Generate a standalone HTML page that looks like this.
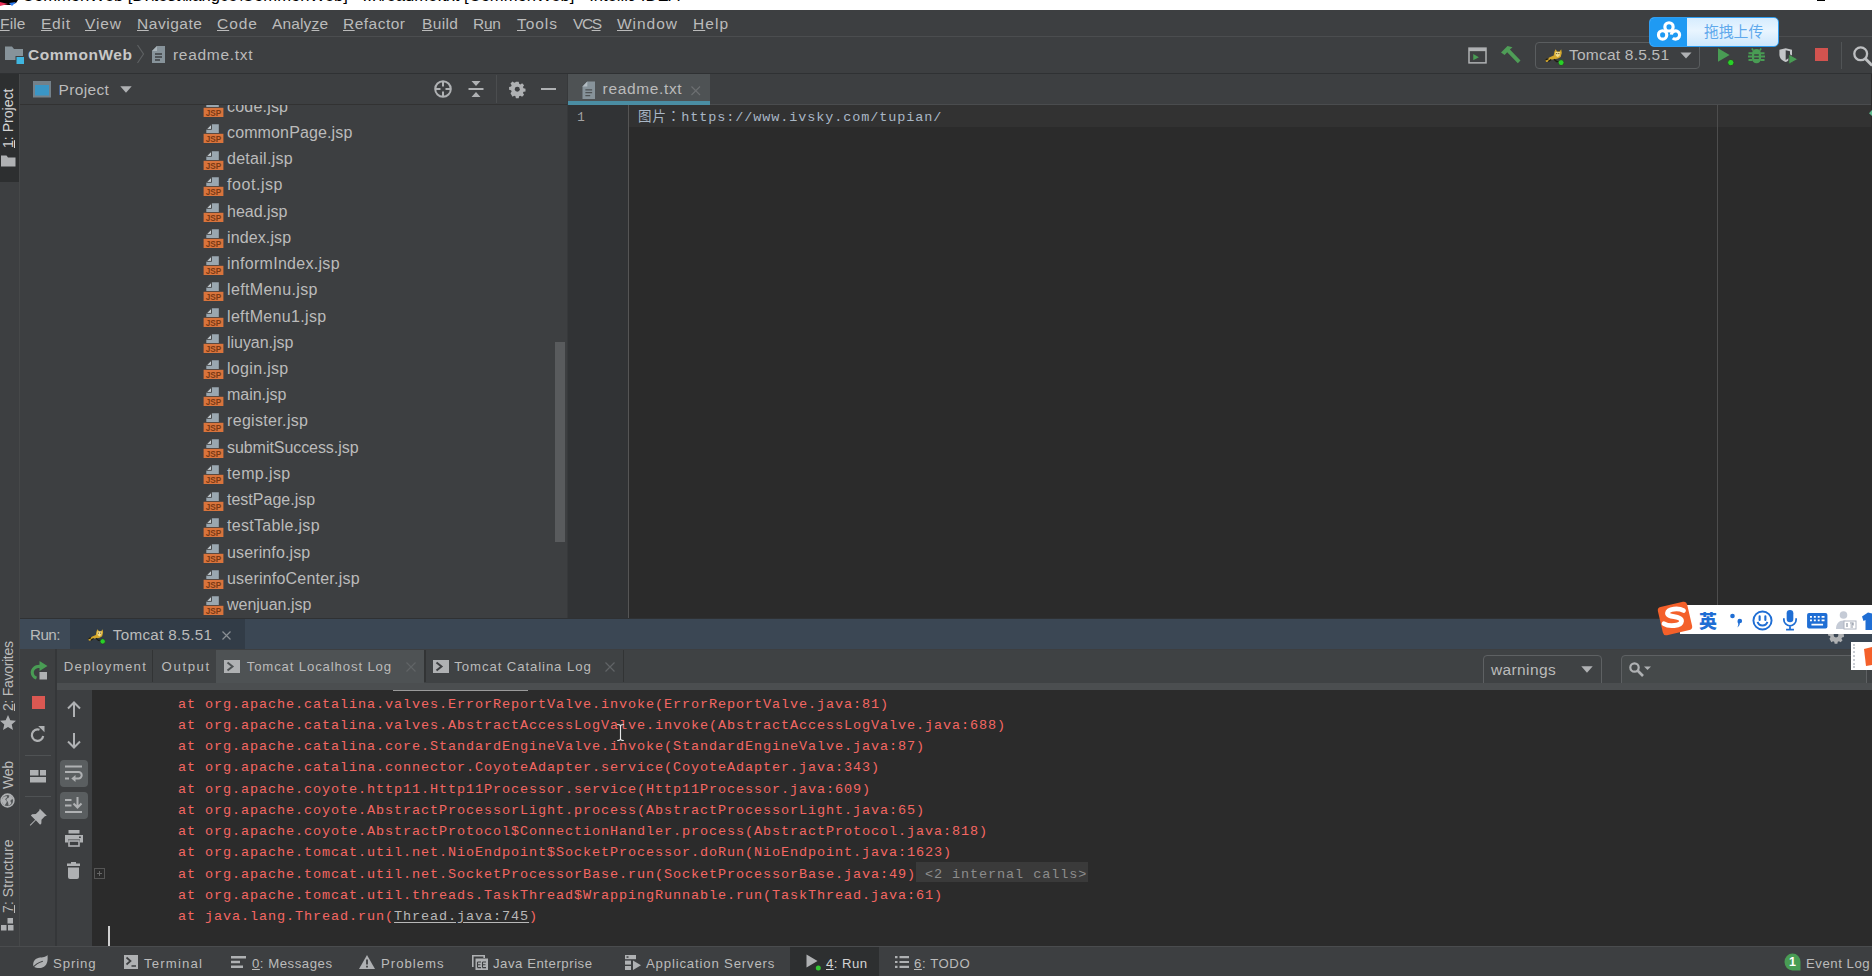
<!DOCTYPE html>
<html lang="en">
<head>
<meta charset="utf-8">
<title>CommonWeb - IntelliJ IDEA</title>
<style>
*{box-sizing:border-box;margin:0;padding:0}
html,body{width:1872px;height:976px;overflow:hidden;background:#3d3f41}
body{position:relative;font-family:"Liberation Sans","Noto Sans CJK SC",sans-serif;color:#bbbbbb;font-size:16px}
.a{position:absolute}
.t{position:absolute;white-space:nowrap;line-height:20px;height:20px;font-size:15.5px}
svg{position:absolute;overflow:visible}
u{text-decoration:underline;text-underline-offset:1px;text-decoration-thickness:1.3px}
#title{left:0;top:0;width:1872px;height:10px;background:#ffffff;overflow:hidden}
#title .t{color:#000;font-size:16.6px;top:-13.6px;left:22px}
#menu{left:0;top:10px;width:1872px;height:27px;background:#3d3f41;border-bottom:1px solid #4b4d4f}
#menu .t{top:3.5px;font-size:15.5px;color:#bbbbbb}
#nav{left:0;top:37px;width:1872px;height:36px;background:#3d3f41}
#navline{left:0;top:73px;width:1872px;height:1px;background:#2f3133;z-index:5}
#nav .t{top:7.7px;font-size:15.5px}
#lstripe{left:0;top:73px;width:20px;height:873px;background:#3d3f41;border-right:1px solid #464849}
.vt{position:absolute;white-space:nowrap;transform-origin:0 0;transform:rotate(-90deg);font-size:14.1px;line-height:18px;height:18px;color:#bbbbbb}
#proj{left:20px;top:73px;width:547px;height:545px;background:#3d3f41}
#projhead{left:0;top:0;width:547px;height:32px;border-bottom:1px solid #323232}
#tree{left:0;top:32px;width:547px;height:513px;overflow:hidden}
.row{position:absolute;left:183px;height:26px;width:300px}
.row span{position:absolute;left:24px;top:0;font-size:16px;line-height:20px;color:#bbbbbb;white-space:nowrap}
#split{left:567px;top:73px;width:1px;height:545px;background:#37393b}
#ed{left:568px;top:73px;width:1304px;height:545px;background:#2b2b2b;overflow:hidden}
#edtabs{left:0;top:0;width:1303px;height:32px;background:#3d3f41;border-bottom:1px solid #4a4c4e}
.mono{font-family:"Liberation Mono","Noto Sans CJK SC",monospace}
#run{left:20px;top:618px;width:1852px;height:328px;background:#3d3f41;border-top:1px solid #2f3133}
#runhead{left:0;top:0;width:1852px;height:30px;background:#3b4754}
#con{left:72px;top:71px;width:1780px;height:256px;background:#2b2b2b;overflow:hidden}
.cl{position:absolute;left:86px;font-size:13.5px;letter-spacing:.9px;line-height:20px;height:20px;color:#f46763;white-space:pre}
.lt{position:absolute;white-space:nowrap;font-size:13.2px;line-height:20px;height:20px;top:6px;color:#bbbbbb}
#bot{left:0;top:946px;width:1872px;height:30px;background:#3d3f41;border-top:1px solid #4a4c4e}
#bot .t{top:7.1px;font-size:13.2px}
</style>
</head>
<body>
<!-- TITLE -->
<div id="title" class="a"><div class="t">CommonWeb [D:\test\liangce\CommonWeb] - ...\readme.txt [CommonWeb] - IntelliJ IDEA</div>
<svg style="left:0;top:0" width="20" height="10" viewBox="0 0 20 10"><path d="M0 0h18l-2 3-6 2-10 0z" fill="#000"/><path d="M0 2l8 2-8 2z" fill="#e8325a"/><path d="M9 3l7-1-4 4z" fill="#2a7af0"/></svg>
<div class="a" style="left:1817px;top:0;width:8px;height:1px;background:#000"></div>
</div>
<!-- MENU -->
<div id="menu" class="a">
<div class="t" style="left:0px;letter-spacing:0.17px"><u>F</u>ile</div>
<div class="t" style="left:41px;letter-spacing:0.76px"><u>E</u>dit</div>
<div class="t" style="left:85px;letter-spacing:0.89px"><u>V</u>iew</div>
<div class="t" style="left:137px;letter-spacing:0.54px"><u>N</u>avigate</div>
<div class="t" style="left:217px;letter-spacing:0.97px"><u>C</u>ode</div>
<div class="t" style="left:272px;letter-spacing:0.14px">Analy<u>z</u>e</div>
<div class="t" style="left:343px;letter-spacing:0.49px"><u>R</u>efactor</div>
<div class="t" style="left:422px;letter-spacing:0.38px"><u>B</u>uild</div>
<div class="t" style="left:473px;letter-spacing:-0.23px">R<u>u</u>n</div>
<div class="t" style="left:517px;letter-spacing:0.95px"><u>T</u>ools</div>
<div class="t" style="left:573px;letter-spacing:-1.45px">VC<u>S</u></div>
<div class="t" style="left:617px;letter-spacing:0.97px"><u>W</u>indow</div>
<div class="t" style="left:693px;letter-spacing:1.04px"><u>H</u>elp</div>
</div>
<!-- NAV -->
<div id="nav" class="a">
<svg style="left:4px;top:8px" width="21" height="20" viewBox="0 0 21 20"><path d="M1 1.5h7l2 2.5h9v11H1z" fill="#87939a"/><rect x="12" y="11.5" width="8.5" height="8" fill="#40b6e0" stroke="#3d3f41" stroke-width="1"/></svg>
<div class="t" style="left:28px;font-weight:bold;color:#c8c8c8;letter-spacing:0.55px">CommonWeb</div>
<svg style="left:136px;top:7px" width="10" height="20" viewBox="0 0 10 20"><path d="M1.5 1l6 9-6 9" fill="none" stroke="#5d6062" stroke-width="1.2"/></svg>
<svg style="left:151px;top:8px" width="15" height="19" viewBox="0 0 15 19"><path d="M6 1h8v17H1V6z" fill="#87939a"/><path d="M1 6l5-5v5z" fill="#aab4ba"/><path d="M4 9h7M4 12h7M4 15h5" stroke="#3d3f41" stroke-width="1.3"/></svg>
<div class="t" style="left:173px;letter-spacing:0.70px">readme.txt</div>
<!-- toolbar right -->
<svg style="left:1468px;top:10px" width="19" height="17" viewBox="0 0 20 18"><rect x="1" y="1.2" width="18" height="15.6" fill="none" stroke="#afb1b3" stroke-width="1.6"/><rect x="1" y="1.2" width="18" height="3.2" fill="#afb1b3"/><path d="M5.5 7.5l6 3.3-6 3.3z" fill="#499c54"/></svg>
<svg style="left:1500px;top:8px" width="21" height="19" viewBox="0 0 21 19"><path d="M1 7.5l6.5-6.5 5 1.2-2.6 2.3 10.6 11-2.7 2.7-10.6-11-2.6 2.9z" fill="#4f9d57"/></svg>
<div class="a" style="left:1535px;top:5px;width:165px;height:27px;border:1px solid #5a5d5f;border-radius:4px"></div>
<svg style="left:1544.5px;top:12px" width="20" height="17" viewBox="0 0 20 17"><path d="M.5 10.800l4.200-2.600 4-1.600.7-3.800L10.500.300l1.700 2.100h2.400L16.200.300l.6 3.700-1.100 4-2.700 1.600-3.600.6-3.900.5-2.800 2.100-1.700.2z" fill="#d4a72c"/><path d="M10.300 2.900h4.900l-.5 3.700-2 1.600-2-1.600z" fill="#f2dc8e"/><path d="M.5 10.800l3-1.200M3.200 12.600l3-2.200M9 10.300l2.600 2.300h2.600" fill="none" stroke="#1d1d12" stroke-width="1.300"/><path d="M11.300 4.600h.9M13.400 4.600h.9" stroke="#30260a" stroke-width="1"/><circle cx="16.100" cy="13.600" r="3" fill="#27d127" stroke="#33402f" stroke-width="1"/></svg>
<div class="t" style="left:1569px;top:8.4px;letter-spacing:0.22px">Tomcat 8.5.51</div>
<svg style="left:1680px;top:15px" width="12" height="7" viewBox="0 0 12 7"><path d="M.5 .5h11L6 6.5z" fill="#afb1b3"/></svg>
<svg style="left:1716px;top:9px" width="20" height="21" viewBox="0 0 20 21"><path d="M2 2.200l11.600 6.800L2 15.800z" fill="#499c54"/><circle cx="14.800" cy="16.600" r="3.200" fill="#27d127" stroke="#33402f" stroke-width="1"/></svg>
<svg style="left:1747.5px;top:11px" width="17" height="16" viewBox="0 0 17 16"><path d="M4 5.500a4.500 4.500 0 0 1 9 0v5.300a4.500 4.500 0 0 1-9 0z" fill="#499c54"/><path d="M5.300 2.500L3.800.500M11.700 2.500L13.200.500" stroke="#499c54" stroke-width="1.600"/><path d="M.5 5.200h4M12.500 5.200h4M0 8.600h4.500M12.500 8.600H17M.5 12h4M12.500 12h4" stroke="#499c54" stroke-width="2"/><path d="M6.200 6.900h4.600M6.200 10.300h4.600" stroke="#3d3f41" stroke-width="1.500"/></svg>
<svg style="left:1779px;top:11px" width="20" height="17" viewBox="0 0 20 17"><path d="M.4 1.800L6.700.300l6.300 1.500v4.700c0 3.800-2.600 6.100-6.300 7.600C3 12.600.4 10.300.4 6.500z" fill="#c4c6c8"/><path d="M6.700 2.300v9.800c2.400-1.200 4.300-2.900 4.300-5.600V3.300z" fill="#3d3f41"/><path d="M9.800 6.200l9 5-9 5z" fill="#499c54" stroke="#3d3f41" stroke-width=".9"/></svg>
<div class="a" style="left:1814.500px;top:11.300px;width:13px;height:12.700px;background:#d2534f"></div>
<div class="a" style="left:1841px;top:5px;width:1px;height:27px;background:#515456"></div>
<svg style="left:1851px;top:8px" width="22" height="22" viewBox="0 0 22 22"><circle cx="9.700" cy="8.800" r="6.400" fill="none" stroke="#bdbfc1" stroke-width="2.300"/><path d="M14.200 13.500l7 7" stroke="#bdbfc1" stroke-width="3"/></svg>
</div>
<!-- BAIDU WIDGET -->
<div class="a" style="left:1649px;top:17px;width:130px;height:30px;border-radius:5px;background:linear-gradient(180deg,#d6ecfe 0,#e9f5ff 45%,#cde7fc 100%);border:1px solid #2f9df0;overflow:hidden">
<div class="a" style="left:-1px;top:-1px;width:38px;height:30px;background:#1f9af3"></div>
<svg style="left:5.500px;top:1.800px" width="26" height="22.500" viewBox="0 0 22 19"><circle cx="11" cy="5.800" r="3.500" fill="none" stroke="#fff" stroke-width="2.700"/><circle cx="5.600" cy="12.600" r="3.500" fill="none" stroke="#fff" stroke-width="2.700"/><path d="M13 12.400a3.500 3.500 0 1 1 1.200 2.900" fill="none" stroke="#fff" stroke-width="2.700"/></svg>
<div class="t" style="left:54px;top:4px;font-size:14.800px;color:#5fa9ec;letter-spacing:0">拖拽上传</div>
</div>
<div id="navline" class="a"></div>
<!-- LEFT STRIPE -->
<div id="lstripe" class="a">
<div class="a" style="left:0;top:0;width:19px;height:109px;background:#2d2f30"></div>
<div class="vt" style="left:-.6px;top:74.8px;color:#d4d4d4;letter-spacing:-0.01px"><u>1</u>: Project</div>
<svg style="left:1px;top:82px" width="15" height="12" viewBox="0 0 15 12"><path d="M0 .5h5.500l1.500 2h7.500v9H0z" fill="#afb1b3"/></svg>
<div class="vt" style="left:-.6px;top:638px;letter-spacing:-0.33px"><u>2</u>: Favorites</div>
<svg style="left:0;top:642px" width="16" height="15" viewBox="0 0 16 15"><path d="M8 0l2.300 5.200 5.700.500-4.300 3.800 1.300 5.500L8 12.100 3 15l1.300-5.500L0 5.700l5.700-.5z" fill="#afb1b3"/></svg>
<div class="vt" style="left:-.6px;top:716px;letter-spacing:-0.37px">Web</div>
<svg style="left:0;top:720px" width="15" height="15" viewBox="0 0 15 15"><circle cx="7.500" cy="7.500" r="6.400" fill="#55585a" stroke="#afb1b3" stroke-width="1.600"/><path d="M3 4.500c1.200-1.200 2.800-1.600 4-1.200.3 1-.2 1.800-1.200 2.200-.8.400-.6 1.400.2 1.800.9.400 1 1.600.4 2.400-.6.800-1 1.800-1.600 2.600C3 11.500 1.800 9.500 1.800 7.500c0-1.100.4-2.200 1.200-3z" fill="#afb1b3"/><path d="M9.500 2c1.800.6 3.200 2.200 3.600 4-.8.600-1.800.400-2.400 1.200-.6.800.2 2 .8 2.800-.6 1.200-1.600 2.200-2.800 2.800-.4-1.200-.2-2.600-.8-3.800-.5-1-1.700-1.600-1.400-2.800.3-1 1.700-1 2.300-1.800.5-.7.400-1.600.7-2.400z" fill="#afb1b3"/></svg>
<div class="vt" style="left:-.6px;top:840px;letter-spacing:0.06px"><u>7</u>: Structure</div>
<svg style="left:1px;top:845px" width="13" height="13" viewBox="0 0 13 13"><rect x="6.500" y="0" width="5.500" height="5.500" fill="#afb1b3"/><rect x="0" y="7" width="5.500" height="5.500" fill="#afb1b3"/><rect x="7" y="7" width="5.500" height="5.500" fill="#afb1b3"/></svg>
</div>
<!-- PROJECT -->
<div id="proj" class="a">
<div id="projhead" class="a">
<svg style="left:13px;top:8px" width="18" height="17" viewBox="0 0 18 17"><rect x="0" y="0" width="18" height="16.500" fill="#74818a"/><rect x="2" y="4" width="14" height="10.500" fill="#3a96c6"/></svg>
<div class="t" style="left:38.5px;top:6.6px;letter-spacing:0.34px">Project</div>
<svg style="left:100px;top:13px" width="12" height="7" viewBox="0 0 12 7"><path d="M.3 .3h11.400L6 6.800z" fill="#afb1b3"/></svg>
<svg style="left:413px;top:6px" width="20" height="20" viewBox="0 0 20 20"><circle cx="10" cy="10" r="7.800" fill="none" stroke="#afb1b3" stroke-width="2"/><path d="M10 2v5.500M10 12.500V18M2 10h5.500M12.500 10H18" stroke="#afb1b3" stroke-width="2"/></svg>
<svg style="left:448px;top:7px" width="16" height="18" viewBox="0 0 16 18"><path d="M.5 9h15" stroke="#afb1b3" stroke-width="2"/><path d="M3.500 1h9L8 6zM3.500 17h9L8 12z" fill="#afb1b3"/></svg>
<div class="a" style="left:476px;top:2px;width:1px;height:28px;background:#4b4d4f"></div>
<svg style="left:488.700px;top:7.700px" width="16.600" height="16.600" viewBox="0 0 18 18"><path d="M7.300 0h3.400l.5 2.400 1.500.7 2.100-1.400 2.400 2.400-1.400 2.100.7 1.500 2.400.5v3.400l-2.400.5-.7 1.500 1.400 2.100-2.400 2.400-2.100-1.400-1.500.7-.5 2.400H7.300l-.5-2.400-1.500-.7-2.100 1.400L.8 13.700l1.400-2.100-.7-1.500L-.9 9.600V6.200l2.400-.5.700-1.500L.8 2.100 3.200-.300l2.100 1.400 1.500-.7z" transform="translate(.9,.9) scale(.9)" fill="#afb1b3"/><circle cx="9" cy="9" r="2.700" fill="#3d3f41"/></svg>
<div class="a" style="left:521px;top:15px;width:15px;height:2px;background:#afb1b3"></div>
</div>
<div id="tree" class="a">
<div class="row" style="top:0"><svg style="left:0;top:-7.8px" width="21" height="21" viewBox="0 0 21 21"><path d="M8.500 1.200H15.800V10H3.300V6.400z" fill="#9aa7b0"/><path d="M3.300 6.400l5.200-5.200v5.200z" fill="#c3cbd0" stroke="#3d3f41" stroke-width=".9"/><rect x=".6" y="10.800" width="19.800" height="9.200" fill="#d9743c"/><text x="10.500" y="18.600" font-family="Liberation Sans,sans-serif" font-size="8.800" font-weight="bold" fill="#7a3a14" text-anchor="middle" textLength="15.500" lengthAdjust="spacingAndGlyphs">JSP</text></svg><span style="top:-8.2px;letter-spacing:0.20px">code.jsp</span></div>
<div class="row" style="top:0"><svg style="left:0;top:18.4px" width="21" height="21" viewBox="0 0 21 21"><path d="M8.500 1.200H15.800V10H3.300V6.400z" fill="#9aa7b0"/><path d="M3.300 6.400l5.200-5.200v5.200z" fill="#c3cbd0" stroke="#3d3f41" stroke-width=".9"/><rect x=".6" y="10.800" width="19.800" height="9.200" fill="#d9743c"/><text x="10.500" y="18.600" font-family="Liberation Sans,sans-serif" font-size="8.800" font-weight="bold" fill="#7a3a14" text-anchor="middle" textLength="15.500" lengthAdjust="spacingAndGlyphs">JSP</text></svg><span style="top:17.8px;letter-spacing:0.13px">commonPage.jsp</span></div>
<div class="row" style="top:0"><svg style="left:0;top:44.6px" width="21" height="21" viewBox="0 0 21 21"><path d="M8.500 1.200H15.800V10H3.300V6.400z" fill="#9aa7b0"/><path d="M3.300 6.400l5.200-5.200v5.200z" fill="#c3cbd0" stroke="#3d3f41" stroke-width=".9"/><rect x=".6" y="10.800" width="19.800" height="9.200" fill="#d9743c"/><text x="10.500" y="18.600" font-family="Liberation Sans,sans-serif" font-size="8.800" font-weight="bold" fill="#7a3a14" text-anchor="middle" textLength="15.500" lengthAdjust="spacingAndGlyphs">JSP</text></svg><span style="top:43.8px;letter-spacing:0.28px">detail.jsp</span></div>
<div class="row" style="top:0"><svg style="left:0;top:70.9px" width="21" height="21" viewBox="0 0 21 21"><path d="M8.500 1.200H15.800V10H3.300V6.400z" fill="#9aa7b0"/><path d="M3.300 6.400l5.200-5.200v5.200z" fill="#c3cbd0" stroke="#3d3f41" stroke-width=".9"/><rect x=".6" y="10.800" width="19.800" height="9.200" fill="#d9743c"/><text x="10.500" y="18.600" font-family="Liberation Sans,sans-serif" font-size="8.800" font-weight="bold" fill="#7a3a14" text-anchor="middle" textLength="15.500" lengthAdjust="spacingAndGlyphs">JSP</text></svg><span style="top:69.8px;letter-spacing:0.56px">foot.jsp</span></div>
<div class="row" style="top:0"><svg style="left:0;top:97.1px" width="21" height="21" viewBox="0 0 21 21"><path d="M8.500 1.200H15.800V10H3.300V6.400z" fill="#9aa7b0"/><path d="M3.300 6.400l5.200-5.200v5.200z" fill="#c3cbd0" stroke="#3d3f41" stroke-width=".9"/><rect x=".6" y="10.800" width="19.800" height="9.200" fill="#d9743c"/><text x="10.500" y="18.600" font-family="Liberation Sans,sans-serif" font-size="8.800" font-weight="bold" fill="#7a3a14" text-anchor="middle" textLength="15.500" lengthAdjust="spacingAndGlyphs">JSP</text></svg><span style="top:96.8px;letter-spacing:-0.01px">head.jsp</span></div>
<div class="row" style="top:0"><svg style="left:0;top:123.3px" width="21" height="21" viewBox="0 0 21 21"><path d="M8.500 1.200H15.800V10H3.300V6.400z" fill="#9aa7b0"/><path d="M3.300 6.400l5.200-5.200v5.200z" fill="#c3cbd0" stroke="#3d3f41" stroke-width=".9"/><rect x=".6" y="10.800" width="19.800" height="9.200" fill="#d9743c"/><text x="10.500" y="18.600" font-family="Liberation Sans,sans-serif" font-size="8.800" font-weight="bold" fill="#7a3a14" text-anchor="middle" textLength="15.500" lengthAdjust="spacingAndGlyphs">JSP</text></svg><span style="top:122.8px;letter-spacing:0.12px">index.jsp</span></div>
<div class="row" style="top:0"><svg style="left:0;top:149.5px" width="21" height="21" viewBox="0 0 21 21"><path d="M8.500 1.200H15.800V10H3.300V6.400z" fill="#9aa7b0"/><path d="M3.300 6.400l5.200-5.200v5.200z" fill="#c3cbd0" stroke="#3d3f41" stroke-width=".9"/><rect x=".6" y="10.800" width="19.800" height="9.200" fill="#d9743c"/><text x="10.500" y="18.600" font-family="Liberation Sans,sans-serif" font-size="8.800" font-weight="bold" fill="#7a3a14" text-anchor="middle" textLength="15.500" lengthAdjust="spacingAndGlyphs">JSP</text></svg><span style="top:148.8px;letter-spacing:0.29px">informIndex.jsp</span></div>
<div class="row" style="top:0"><svg style="left:0;top:175.7px" width="21" height="21" viewBox="0 0 21 21"><path d="M8.500 1.200H15.800V10H3.300V6.400z" fill="#9aa7b0"/><path d="M3.300 6.400l5.200-5.200v5.200z" fill="#c3cbd0" stroke="#3d3f41" stroke-width=".9"/><rect x=".6" y="10.800" width="19.800" height="9.200" fill="#d9743c"/><text x="10.500" y="18.600" font-family="Liberation Sans,sans-serif" font-size="8.800" font-weight="bold" fill="#7a3a14" text-anchor="middle" textLength="15.500" lengthAdjust="spacingAndGlyphs">JSP</text></svg><span style="top:174.8px;letter-spacing:0.38px">leftMenu.jsp</span></div>
<div class="row" style="top:0"><svg style="left:0;top:202.0px" width="21" height="21" viewBox="0 0 21 21"><path d="M8.500 1.200H15.800V10H3.300V6.400z" fill="#9aa7b0"/><path d="M3.300 6.400l5.200-5.200v5.200z" fill="#c3cbd0" stroke="#3d3f41" stroke-width=".9"/><rect x=".6" y="10.800" width="19.800" height="9.200" fill="#d9743c"/><text x="10.500" y="18.600" font-family="Liberation Sans,sans-serif" font-size="8.800" font-weight="bold" fill="#7a3a14" text-anchor="middle" textLength="15.500" lengthAdjust="spacingAndGlyphs">JSP</text></svg><span style="top:201.8px;letter-spacing:0.33px">leftMenu1.jsp</span></div>
<div class="row" style="top:0"><svg style="left:0;top:228.2px" width="21" height="21" viewBox="0 0 21 21"><path d="M8.500 1.200H15.800V10H3.300V6.400z" fill="#9aa7b0"/><path d="M3.300 6.400l5.200-5.200v5.200z" fill="#c3cbd0" stroke="#3d3f41" stroke-width=".9"/><rect x=".6" y="10.800" width="19.800" height="9.200" fill="#d9743c"/><text x="10.500" y="18.600" font-family="Liberation Sans,sans-serif" font-size="8.800" font-weight="bold" fill="#7a3a14" text-anchor="middle" textLength="15.500" lengthAdjust="spacingAndGlyphs">JSP</text></svg><span style="top:227.8px;letter-spacing:-0.04px">liuyan.jsp</span></div>
<div class="row" style="top:0"><svg style="left:0;top:254.4px" width="21" height="21" viewBox="0 0 21 21"><path d="M8.500 1.200H15.800V10H3.300V6.400z" fill="#9aa7b0"/><path d="M3.300 6.400l5.200-5.200v5.200z" fill="#c3cbd0" stroke="#3d3f41" stroke-width=".9"/><rect x=".6" y="10.800" width="19.800" height="9.200" fill="#d9743c"/><text x="10.500" y="18.600" font-family="Liberation Sans,sans-serif" font-size="8.800" font-weight="bold" fill="#7a3a14" text-anchor="middle" textLength="15.500" lengthAdjust="spacingAndGlyphs">JSP</text></svg><span style="top:253.8px;letter-spacing:0.32px">login.jsp</span></div>
<div class="row" style="top:0"><svg style="left:0;top:280.6px" width="21" height="21" viewBox="0 0 21 21"><path d="M8.500 1.200H15.800V10H3.300V6.400z" fill="#9aa7b0"/><path d="M3.300 6.400l5.200-5.200v5.200z" fill="#c3cbd0" stroke="#3d3f41" stroke-width=".9"/><rect x=".6" y="10.800" width="19.800" height="9.200" fill="#d9743c"/><text x="10.500" y="18.600" font-family="Liberation Sans,sans-serif" font-size="8.800" font-weight="bold" fill="#7a3a14" text-anchor="middle" textLength="15.500" lengthAdjust="spacingAndGlyphs">JSP</text></svg><span style="top:279.8px;letter-spacing:-0.04px">main.jsp</span></div>
<div class="row" style="top:0"><svg style="left:0;top:306.8px" width="21" height="21" viewBox="0 0 21 21"><path d="M8.500 1.200H15.800V10H3.300V6.400z" fill="#9aa7b0"/><path d="M3.300 6.400l5.200-5.200v5.200z" fill="#c3cbd0" stroke="#3d3f41" stroke-width=".9"/><rect x=".6" y="10.800" width="19.800" height="9.200" fill="#d9743c"/><text x="10.500" y="18.600" font-family="Liberation Sans,sans-serif" font-size="8.800" font-weight="bold" fill="#7a3a14" text-anchor="middle" textLength="15.500" lengthAdjust="spacingAndGlyphs">JSP</text></svg><span style="top:305.8px;letter-spacing:0.33px">register.jsp</span></div>
<div class="row" style="top:0"><svg style="left:0;top:333.1px" width="21" height="21" viewBox="0 0 21 21"><path d="M8.500 1.200H15.800V10H3.300V6.400z" fill="#9aa7b0"/><path d="M3.300 6.400l5.200-5.200v5.200z" fill="#c3cbd0" stroke="#3d3f41" stroke-width=".9"/><rect x=".6" y="10.800" width="19.800" height="9.200" fill="#d9743c"/><text x="10.500" y="18.600" font-family="Liberation Sans,sans-serif" font-size="8.800" font-weight="bold" fill="#7a3a14" text-anchor="middle" textLength="15.500" lengthAdjust="spacingAndGlyphs">JSP</text></svg><span style="top:332.8px;letter-spacing:-0.06px">submitSuccess.jsp</span></div>
<div class="row" style="top:0"><svg style="left:0;top:359.3px" width="21" height="21" viewBox="0 0 21 21"><path d="M8.500 1.200H15.800V10H3.300V6.400z" fill="#9aa7b0"/><path d="M3.300 6.400l5.200-5.200v5.200z" fill="#c3cbd0" stroke="#3d3f41" stroke-width=".9"/><rect x=".6" y="10.800" width="19.800" height="9.200" fill="#d9743c"/><text x="10.500" y="18.600" font-family="Liberation Sans,sans-serif" font-size="8.800" font-weight="bold" fill="#7a3a14" text-anchor="middle" textLength="15.500" lengthAdjust="spacingAndGlyphs">JSP</text></svg><span style="top:358.8px;letter-spacing:0.40px">temp.jsp</span></div>
<div class="row" style="top:0"><svg style="left:0;top:385.5px" width="21" height="21" viewBox="0 0 21 21"><path d="M8.500 1.200H15.800V10H3.300V6.400z" fill="#9aa7b0"/><path d="M3.300 6.400l5.200-5.200v5.200z" fill="#c3cbd0" stroke="#3d3f41" stroke-width=".9"/><rect x=".6" y="10.800" width="19.800" height="9.200" fill="#d9743c"/><text x="10.500" y="18.600" font-family="Liberation Sans,sans-serif" font-size="8.800" font-weight="bold" fill="#7a3a14" text-anchor="middle" textLength="15.500" lengthAdjust="spacingAndGlyphs">JSP</text></svg><span style="top:384.8px;letter-spacing:0.01px">testPage.jsp</span></div>
<div class="row" style="top:0"><svg style="left:0;top:411.7px" width="21" height="21" viewBox="0 0 21 21"><path d="M8.500 1.200H15.800V10H3.300V6.400z" fill="#9aa7b0"/><path d="M3.300 6.400l5.200-5.200v5.200z" fill="#c3cbd0" stroke="#3d3f41" stroke-width=".9"/><rect x=".6" y="10.800" width="19.800" height="9.200" fill="#d9743c"/><text x="10.500" y="18.600" font-family="Liberation Sans,sans-serif" font-size="8.800" font-weight="bold" fill="#7a3a14" text-anchor="middle" textLength="15.500" lengthAdjust="spacingAndGlyphs">JSP</text></svg><span style="top:410.8px;letter-spacing:0.30px">testTable.jsp</span></div>
<div class="row" style="top:0"><svg style="left:0;top:437.9px" width="21" height="21" viewBox="0 0 21 21"><path d="M8.500 1.200H15.800V10H3.300V6.400z" fill="#9aa7b0"/><path d="M3.300 6.400l5.200-5.200v5.200z" fill="#c3cbd0" stroke="#3d3f41" stroke-width=".9"/><rect x=".6" y="10.800" width="19.800" height="9.200" fill="#d9743c"/><text x="10.500" y="18.600" font-family="Liberation Sans,sans-serif" font-size="8.800" font-weight="bold" fill="#7a3a14" text-anchor="middle" textLength="15.500" lengthAdjust="spacingAndGlyphs">JSP</text></svg><span style="top:437.8px;letter-spacing:0.13px">userinfo.jsp</span></div>
<div class="row" style="top:0"><svg style="left:0;top:464.2px" width="21" height="21" viewBox="0 0 21 21"><path d="M8.500 1.200H15.800V10H3.300V6.400z" fill="#9aa7b0"/><path d="M3.300 6.400l5.200-5.200v5.200z" fill="#c3cbd0" stroke="#3d3f41" stroke-width=".9"/><rect x=".6" y="10.800" width="19.800" height="9.200" fill="#d9743c"/><text x="10.500" y="18.600" font-family="Liberation Sans,sans-serif" font-size="8.800" font-weight="bold" fill="#7a3a14" text-anchor="middle" textLength="15.500" lengthAdjust="spacingAndGlyphs">JSP</text></svg><span style="top:463.8px;letter-spacing:0.21px">userinfoCenter.jsp</span></div>
<div class="row" style="top:0"><svg style="left:0;top:490.4px" width="21" height="21" viewBox="0 0 21 21"><path d="M8.500 1.200H15.800V10H3.300V6.400z" fill="#9aa7b0"/><path d="M3.300 6.400l5.200-5.200v5.200z" fill="#c3cbd0" stroke="#3d3f41" stroke-width=".9"/><rect x=".6" y="10.800" width="19.800" height="9.200" fill="#d9743c"/><text x="10.500" y="18.600" font-family="Liberation Sans,sans-serif" font-size="8.800" font-weight="bold" fill="#7a3a14" text-anchor="middle" textLength="15.500" lengthAdjust="spacingAndGlyphs">JSP</text></svg><span style="top:489.8px;letter-spacing:-0.02px">wenjuan.jsp</span></div>
<div class="a" style="left:535px;top:237px;width:10px;height:200px;background:#595b5d"></div>
</div>
</div>
<div id="split" class="a"></div>
<!-- EDITOR -->
<div id="ed" class="a">
<div id="edtabs" class="a">
<div class="a" style="left:0;top:0;width:142px;height:31px;background:#4e5254"></div>
<div class="a" style="left:0;top:28px;width:142px;height:4px;background:#4a8da3"></div>
<svg style="left:13.500px;top:7.500px" width="13.500" height="18.500" viewBox="0 0 14 19"><path d="M5.500 .5H13.500v18H.5V5.500z" fill="#87939a"/><path d="M.5 5.500l5-5v5z" fill="#b3bcc2"/><path d="M3.500 9h7M3.500 12h7M3.500 15h5" stroke="#4e5254" stroke-width="1.300"/></svg>
<div class="t" style="left:34.600px;top:6.4px;letter-spacing:0.64px">readme.txt</div>
<svg style="left:122.800px;top:12.500px" width="9.500" height="9.500" viewBox="0 0 10 10"><path d="M.5 .5l9 9M9.500 .5l-9 9" stroke="#6c6f71" stroke-width="1.200"/></svg>
</div>
<div class="a" style="left:0;top:32px;width:1303px;height:22px;background:#323232"></div>
<div class="a" style="left:0;top:32px;width:60px;height:513px;background:#313335"></div>
<div class="a" style="left:60px;top:32px;width:1px;height:513px;background:#555555"></div>
<div class="a" style="left:1149px;top:32px;width:1px;height:513px;background:#4d4d4d"></div>
<div class="t mono" style="left:9.300px;top:35px;font-size:12.5px;color:#a4a3a3">1</div>
<div class="t mono" style="left:70px;top:32.2px;font-size:13.5px;letter-spacing:.9px;color:#a9b7c6"><span style="font-size:13.5px;letter-spacing:.9px">图片<span style="font-family:'Noto Sans CJK JP',sans-serif">：</span></span>https://www.ivsky.com/tupian/</div>
<svg style="left:1300.500px;top:37px" width="4" height="6" viewBox="0 0 4 6"><path d="M0 3.200L3 0h1v6H3z" fill="#5fb88c"/></svg>
</div>
<!-- RUN -->
<div id="run" class="a">
<div id="runhead" class="a">
<div class="a" style="left:0;top:0;width:50px;height:30px;background:#3e4a57"></div>
<div class="a" style="left:50px;top:0;width:175px;height:30px;background:#323c47"></div>
<div class="t" style="left:10px;top:6.3px;letter-spacing:-0.53px;font-size:15.2px">Run:</div>
<svg style="left:68.2px;top:10px" width="18" height="15.300" viewBox="0 0 20 17"><path d="M.5 10.800l4.200-2.600 4-1.600.7-3.800L10.500.300l1.700 2.100h2.400L16.200.300l.6 3.700-1.100 4-2.700 1.600-3.600.6-3.900.5-2.800 2.100-1.700.2z" fill="#d4a72c"/><path d="M10.300 2.900h4.900l-.5 3.700-2 1.600-2-1.600z" fill="#f2dc8e"/><path d="M.5 10.800l3-1.200M3.200 12.600l3-2.200M9 10.300l2.600 2.300h2.600" fill="none" stroke="#1d1d12" stroke-width="1.300"/><path d="M11.300 4.600h.9M13.400 4.600h.9" stroke="#30260a" stroke-width="1"/><circle cx="16.300" cy="13.800" r="3" fill="#27d127" stroke="#2a3a2f" stroke-width="1"/></svg>
<div class="t" style="left:92.8px;top:6.3px;letter-spacing:0.32px;font-size:15.2px">Tomcat 8.5.51</div>
<svg style="left:202px;top:12px" width="9" height="9" viewBox="0 0 9 9"><path d="M.5 .5l8 8M8.500 .5l-8 8" stroke="#8a8f94" stroke-width="1.200"/></svg>
<svg style="left:1808px;top:8px" width="16" height="16" viewBox="0 0 18 18"><path d="M7.300 0h3.400l.5 2.400 1.500.7 2.100-1.400 2.400 2.400-1.400 2.100.7 1.500 2.400.5v3.400l-2.400.5-.7 1.500 1.400 2.100-2.400 2.400-2.100-1.400-1.500.7-.5 2.400H7.300l-.5-2.400-1.500-.7-2.100 1.400L.8 13.700l1.400-2.100-.7-1.500L-.9 9.600V6.200l2.400-.5.700-1.500L.8 2.100 3.200-.300l2.100 1.400 1.500-.7z" transform="translate(.9,.9) scale(.9)" fill="#afb1b3"/><circle cx="9" cy="9" r="2.700" fill="#3b4754"/></svg>
</div>
<!-- left toolbar -->
<div class="a" style="left:35px;top:30px;width:2px;height:297px;background:#353739"></div>
<svg style="left:10px;top:42px" width="18" height="19" viewBox="0 0 18 19"><path d="M9.500 0l8 5-8 5V7C6 7 3.800 9 3.800 11.500c0 2 1.300 3.600 3.200 4.300l-1 2.700C2.800 17.400.700 14.800.700 11.500.700 7.300 4.500 3.800 9.500 3.800z" fill="#499c54"/><rect x="9.500" y="11" width="7.500" height="7.500" fill="#afb1b3"/></svg>
<div class="a" style="left:12px;top:77px;width:12.500px;height:12.500px;background:#db5852"></div>
<svg style="left:10px;top:107px" width="16" height="17" viewBox="0 0 16 17"><path d="M13.200 10a5.700 5.700 0 1 1-3.700-6.300" fill="none" stroke="#afb1b3" stroke-width="2.200"/><path d="M8.200 0h6.300v6.300z" fill="#afb1b3"/></svg>
<div class="a" style="left:5px;top:136px;width:26px;height:1px;background:#4f5254"></div>
<svg style="left:10px;top:151px" width="16" height="13" viewBox="0 0 16 13"><rect x="0" y="0" width="8.500" height="5.500" fill="#afb1b3"/><rect x="10" y="0" width="6" height="5.500" fill="#afb1b3"/><rect x="0" y="7" width="16" height="5.500" fill="#afb1b3"/></svg>
<div class="a" style="left:5px;top:177px;width:26px;height:1px;background:#4f5254"></div>
<svg style="left:8.500px;top:189px" width="18.500" height="18.500" viewBox="0 0 16 16"><path d="M9.300.600L15.400 6.700 13.700 7.200 10.800 10.100 10.700 13.300 9.600 14.400 5.900 10.700 1.300 15.300.700 14.700 5.300 10.100 1.600 6.400 2.700 5.300 5.900 5.200 8.800 2.300z" fill="#afb1b3"/></svg>
<!-- second toolbar -->
<svg style="left:47px;top:82px" width="14" height="16" viewBox="0 0 14 16"><path d="M7 1.500V16M1 7.500l6-6 6 6" fill="none" stroke="#afb1b3" stroke-width="2"/></svg>
<svg style="left:47px;top:114px" width="14" height="16" viewBox="0 0 14 16"><path d="M7 0v14.500M1 8.500l6 6 6-6" fill="none" stroke="#afb1b3" stroke-width="2"/></svg>
<div class="a" style="left:40px;top:141px;width:28px;height:27px;background:#5a5e60;border-radius:4px"></div>
<svg style="left:45px;top:146px" width="18" height="17" viewBox="0 0 18 17"><path d="M0 1.500h17M0 7h13.500a3.200 3.200 0 0 1 0 6.400H8M0 13.400h4" fill="none" stroke="#afb1b3" stroke-width="2"/><path d="M10.500 9.900v7l-4.200-3.500z" fill="#afb1b3"/></svg>
<div class="a" style="left:40px;top:173px;width:28px;height:27px;background:#5a5e60;border-radius:4px"></div>
<svg style="left:45px;top:178px" width="18" height="17" viewBox="0 0 18 17"><path d="M0 3h6.500M0 8.500h6.500M0 15h17M12.500 0v9.500M8.500 6.500l4 4 4-4" fill="none" stroke="#afb1b3" stroke-width="2"/></svg>
<svg style="left:45px;top:211px" width="18" height="17" viewBox="0 0 18 17"><rect x="3.500" y="0" width="11" height="3.500" fill="#afb1b3"/><path d="M0 5h18v7.500h-3V9.500H3v3H0z" fill="#afb1b3"/><rect x="4" y="11" width="10" height="5" fill="none" stroke="#afb1b3" stroke-width="1.600"/><rect x="14" y="6.500" width="1.800" height="1.500" fill="#3d3f41"/></svg>
<svg style="left:47px;top:243px" width="13" height="17" viewBox="0 0 13 17"><path d="M4 0h5v1.500h4V4H0V1.500h4z" fill="#afb1b3"/><path d="M1 5.500h11V15a2 2 0 0 1-2 2H3a2 2 0 0 1-2-2z" fill="#afb1b3"/></svg>
<!-- log tabs -->
<div class="a" style="left:37px;top:31px;width:1815px;height:33px;background:#3f4244"></div>
<div class="lt" style="left:43.7px;top:38px;letter-spacing:1.32px">Deployment</div>
<div class="a" style="left:132px;top:31px;width:1px;height:32px;background:#323435"></div>
<div class="lt" style="left:141.6px;top:38px;letter-spacing:1.60px">Output</div>
<div class="a" style="left:196px;top:31px;width:208px;height:33px;background:#4e5254"></div>
<svg style="left:204px;top:41px" width="16" height="13" viewBox="0 0 16 13"><rect width="16" height="13" fill="#afb1b3"/><path d="M3.500 2.500l5 4-5 4" fill="none" stroke="#4e5254" stroke-width="2"/></svg>
<div class="lt" style="left:226.7px;top:38px;letter-spacing:0.85px">Tomcat Localhost Log</div>
<svg style="left:386px;top:43px" width="10" height="10" viewBox="0 0 10 10"><path d="M.5 .5l9 9M9.500 .5l-9 9" stroke="#606466" stroke-width="1.200"/></svg>
<div class="a" style="left:404px;top:31px;width:2px;height:32px;background:#323435"></div>
<svg style="left:413px;top:41px" width="16" height="13" viewBox="0 0 16 13"><rect width="16" height="13" fill="#afb1b3"/><path d="M3.500 2.500l5 4-5 4" fill="none" stroke="#3d3f41" stroke-width="2"/></svg>
<div class="lt" style="left:434.3px;top:38px;letter-spacing:0.90px">Tomcat Catalina Log</div>
<svg style="left:585px;top:43px" width="10" height="10" viewBox="0 0 10 10"><path d="M.5 .5l9 9M9.500 .5l-9 9" stroke="#606466" stroke-width="1.200"/></svg>
<div class="a" style="left:603px;top:31px;width:1px;height:32px;background:#323435"></div>
<!-- filter combo + search -->
<div class="a" style="left:1463px;top:36px;width:119px;height:34px;border:1px solid #5e6163;border-radius:4px"></div>
<div class="t" style="left:1471px;top:41px;letter-spacing:0.38px">warnings</div>
<svg style="left:1561px;top:47px" width="12" height="7" viewBox="0 0 12 7"><path d="M.3 .3h11.400L6 6.800z" fill="#afb1b3"/></svg>
<div class="a" style="left:1601px;top:36px;width:246px;height:34px;border:1px solid #5e6163;border-radius:4px;background:#45494a"></div>
<svg style="left:1609px;top:43px" width="24" height="15" viewBox="0 0 24 15"><circle cx="5.500" cy="5.500" r="4.200" fill="none" stroke="#afb1b3" stroke-width="2.200"/><path d="M8.500 8.500l5.500 5.500" stroke="#afb1b3" stroke-width="2.600"/><path d="M15 4.500h7L18.500 8z" fill="#afb1b3"/></svg>
<div class="a" style="left:37px;top:64px;width:1815px;height:7px;background:#4b4e50"></div>
<!-- console -->
<div id="con" class="a mono">
<div class="a" style="left:301px;top:0;width:135px;height:1px;background:#9a9a9a"></div>
<div class="cl" style="top:5px">at org.apache.catalina.valves.ErrorReportValve.invoke(ErrorReportValve.java:81)</div>
<div class="cl" style="top:26px">at org.apache.catalina.valves.AbstractAccessLogValve.invoke(AbstractAccessLogValve.java:688)</div>
<div class="cl" style="top:47px">at org.apache.catalina.core.StandardEngineValve.invoke(StandardEngineValve.java:87)</div>
<div class="cl" style="top:68px">at org.apache.catalina.connector.CoyoteAdapter.service(CoyoteAdapter.java:343)</div>
<div class="cl" style="top:90px">at org.apache.coyote.http11.Http11Processor.service(Http11Processor.java:609)</div>
<div class="cl" style="top:111px">at org.apache.coyote.AbstractProcessorLight.process(AbstractProcessorLight.java:65)</div>
<div class="cl" style="top:132px">at org.apache.coyote.AbstractProtocol$ConnectionHandler.process(AbstractProtocol.java:818)</div>
<div class="cl" style="top:153px">at org.apache.tomcat.util.net.NioEndpoint$SocketProcessor.doRun(NioEndpoint.java:1623)</div>
<div class="cl" style="top:175px">at org.apache.tomcat.util.net.SocketProcessorBase.run(SocketProcessorBase.java:49)<span style="background:#3a3a3a;color:#8c8c8c;padding:5px 1px 0 9px">&lt;2 internal calls&gt;</span></div>
<div class="cl" style="top:196px">at org.apache.tomcat.util.threads.TaskThread$WrappingRunnable.run(TaskThread.java:61)</div>
<div class="cl" style="top:217px">at java.lang.Thread.run(<span style="color:#b8b8b8;text-decoration:underline;text-underline-offset:2px">Thread.java:745</span>)</div>
<svg style="left:2px;top:178px" width="11" height="11" viewBox="0 0 11 11"><rect x=".5" y=".5" width="10" height="10" fill="none" stroke="#555555"/><path d="M3 5.500h5M5.500 3v5" stroke="#666" stroke-width="1"/></svg>
<div class="a" style="left:16px;top:236px;width:2px;height:21px;background:#d0d0d0"></div>
<!-- mouse I-beam -->
<svg style="left:524px;top:34px" width="9" height="17" viewBox="0 0 9 18"><path d="M1 .5c2 0 3.500.8 3.500 2v13c0 1.200-1.500 2-3.500 2M8 .5c-2 0-3.500.8-3.500 2M8 17.500c-2 0-3.500-.8-3.500-2" fill="none" stroke="#e6e6e6" stroke-width="1.200"/></svg>
</div>
</div>
<!-- SOGOU IME -->
<div class="a" style="left:1680px;top:605px;width:192px;height:29px;background:#ffffff"></div>
<svg style="left:1656px;top:600px" width="38" height="37" viewBox="0 0 38 37"><rect x="4" y="4" width="30" height="29" rx="3.500" fill="#f4602a" transform="rotate(-13 19 18.500)"/><path d="M27.500 10.500c-5-2.800-15.500-2-16 2.500-.5 4.800 14.500 2.500 14 8.200-.5 5-12.500 5.600-17.500 2.600" fill="none" stroke="#fff" stroke-width="4.800" stroke-linecap="round"/></svg>
<div class="t" style="left:1699px;top:610px;font-size:18px;font-weight:900;color:#1f6ed4;font-family:'Noto Sans CJK SC',sans-serif">英</div>
<svg style="left:1729px;top:612px" width="16" height="16" viewBox="0 0 16 16"><circle cx="3.500" cy="4" r="2.300" fill="#1f6ed4"/><path d="M8.500 9a2.300 2.300 0 1 1 2.300 2.300c0 2-1 3.500-2.800 4.200 1-1 1.500-2.300 1.200-4-.5-.6-.7-1.500-.7-2.500z" fill="#1f6ed4"/></svg>
<svg style="left:1751.500px;top:610px" width="21" height="21" viewBox="0 0 22 22"><circle cx="11" cy="11" r="9.500" fill="none" stroke="#1f6ed4" stroke-width="2"/><path d="M8 6.500v4M14 6.500v4" stroke="#1f6ed4" stroke-width="2.200" stroke-linecap="round"/><path d="M5.800 12.500a5.500 5.500 0 0 0 10.400 0" fill="none" stroke="#1f6ed4" stroke-width="2"/></svg>
<svg style="left:1783px;top:610px" width="14" height="21" viewBox="0 0 16 24"><rect x="4.200" y="0" width="7.600" height="14" rx="3.800" fill="#1f6ed4"/><path d="M1 9.500v1.500a7 7 0 0 0 14 0V9.500M8 18v4M3.500 22.500h9" fill="none" stroke="#1f6ed4" stroke-width="2"/></svg>
<svg style="left:1807px;top:613px" width="20.500" height="15.500" viewBox="0 0 21 16"><rect x="0" y="0" width="21" height="16" rx="2" fill="#1f6ed4"/><path d="M3 4h2M7 4h2M11 4h2M15 4h3M3 7.500h2M7 7.500h2M11 7.500h2M15 7.500h3M4.500 12h12" stroke="#fff" stroke-width="1.800"/></svg>
<svg style="left:1836px;top:611px" width="21" height="19" viewBox="0 0 21 19"><circle cx="7.500" cy="4" r="3.800" fill="#c5cbd6"/><path d="M0 18c0-5.500 3-8.500 7.500-8.500 2.500 0 4 .8 5 2V18z" fill="#c5cbd6"/><rect x="8" y="10" width="12" height="8" fill="#fff" stroke="#aeb4c0" stroke-width="1"/><path d="M11 12v4M14 12h3v2h-2.500M14.500 16h2.500" stroke="#8d95a3" stroke-width="1.200" fill="none"/></svg>
<svg style="left:1862px;top:611px" width="10" height="20" viewBox="0 0 10 20"><path d="M0 5.500L6 1.500l4 1V19H3.500V9L1.500 10z" fill="#1f6ed4"/></svg>
<div class="a" style="left:1851px;top:642px;width:21px;height:28px;background:#ffffff"></div>
<div class="a" style="left:1853px;top:644px;width:0;height:24px;border-left:2px dotted #c8ccd2"></div>
<svg style="left:1863px;top:646px" width="9" height="20" viewBox="0 0 9 20"><path d="M1 3l8-2v18l-6 1z" fill="#f4602a"/></svg>
<!-- BOTTOM -->
<div id="bot" class="a">
<svg style="left:32px;top:8px" width="16" height="14" viewBox="0 0 16 14"><path d="M15.500 0c.5 5 0 9.500-3.500 11.800-3 2-7.500 1.600-10.500-.3C.5 8 2 4.500 5.500 3.200 9 2 13 3 15.500 0z" fill="#afb1b3"/><path d="M.3 13.500c2.500-3.500 6-6 10.500-7.200" fill="none" stroke="#3d3f41" stroke-width="1.100"/></svg>
<div class="t" style="left:53px;letter-spacing:0.88px">Spring</div>
<svg style="left:124px;top:8px" width="14" height="14" viewBox="0 0 14 14"><rect width="14" height="14" fill="#afb1b3"/><path d="M2.500 2.500l4 3.500-4 3.500M7.500 11h4.500" fill="none" stroke="#3d3f41" stroke-width="1.700"/></svg>
<div class="t" style="left:144px;letter-spacing:1.17px">Terminal</div>
<svg style="left:231px;top:9px" width="15" height="12" viewBox="0 0 15 12"><path d="M0 1.200h15M0 6h9M0 10.800h12" stroke="#afb1b3" stroke-width="2.400"/></svg>
<div class="t" style="left:252px;letter-spacing:0.52px"><u>0</u>: Messages</div>
<svg style="left:359px;top:8px" width="16" height="14" viewBox="0 0 16 14"><path d="M8 0l8 14H0z" fill="#afb1b3"/><path d="M8 4.500v5M8 10.800v1.800" stroke="#3d3f41" stroke-width="1.800"/></svg>
<div class="t" style="left:381px;letter-spacing:0.97px">Problems</div>
<svg style="left:472px;top:8px" width="16" height="15" viewBox="0 0 16 15"><path d="M.8 12V.8h11.400V3" fill="none" stroke="#afb1b3" stroke-width="1.600"/><rect x="3.500" y="3.500" width="12.500" height="11.500" fill="#afb1b3"/><path d="M5.500 7h3.500M5.500 9.800h3M5.500 12.600h3.500M5.500 7v5.600M10.500 7h3.500M10.500 9.800h3M10.500 12.600h3.500M10.500 7v5.600" stroke="#3d3f41" stroke-width="1.100" fill="none"/></svg>
<div class="t" style="left:493px;letter-spacing:0.53px">Java Enterprise</div>
<svg style="left:625px;top:8px" width="16" height="15" viewBox="0 0 16 15"><rect x="0" y="0" width="11" height="4.200" fill="#afb1b3"/><rect x="0" y="5.600" width="6" height="4" fill="#afb1b3"/><rect x="0" y="11" width="6" height="4" fill="#afb1b3"/><path d="M8 5.500l8 4.700-8 4.800z" fill="#afb1b3"/><rect x="1.500" y="1.300" width="2" height="1.500" fill="#3d3f41"/></svg>
<div class="t" style="left:646px;letter-spacing:0.82px">Application Servers</div>
<div class="a" style="left:790px;top:0;width:89px;height:30px;background:#2d2f30"></div>
<svg style="left:806px;top:7px" width="16" height="17" viewBox="0 0 16 17"><path d="M.5 .5l11 6.500-11 6.500z" fill="#afb1b3"/><circle cx="12.300" cy="14" r="2.500" fill="#34c634"/></svg>
<div class="t" style="left:826px;color:#d4d4d4;letter-spacing:0.42px"><u>4</u>: Run</div>
<svg style="left:895px;top:9px" width="14" height="12" viewBox="0 0 14 12"><path d="M0 1.200h2.500M4.500 1.200H14M0 6h2.500M4.500 6H14M0 10.800h2.500M4.500 10.800H14" stroke="#afb1b3" stroke-width="2.200"/></svg>
<div class="t" style="left:914px;letter-spacing:0.57px"><u>6</u>: TODO</div>
<svg style="left:1784px;top:6px" width="17" height="18" viewBox="0 0 17 18"><path d="M8.500 .5a8 8.500 0 0 1 8 8.500v8.500h-8a8 8.500 0 0 1 0-17z" fill="#499c54"/></svg>
<div class="t" style="left:1789px;top:5px;font-size:12.500px;font-weight:bold;color:#fff;letter-spacing:0">1</div>
<div class="t" style="left:1806px;letter-spacing:0.53px">Event Log</div>
</div>
</body>
</html>
